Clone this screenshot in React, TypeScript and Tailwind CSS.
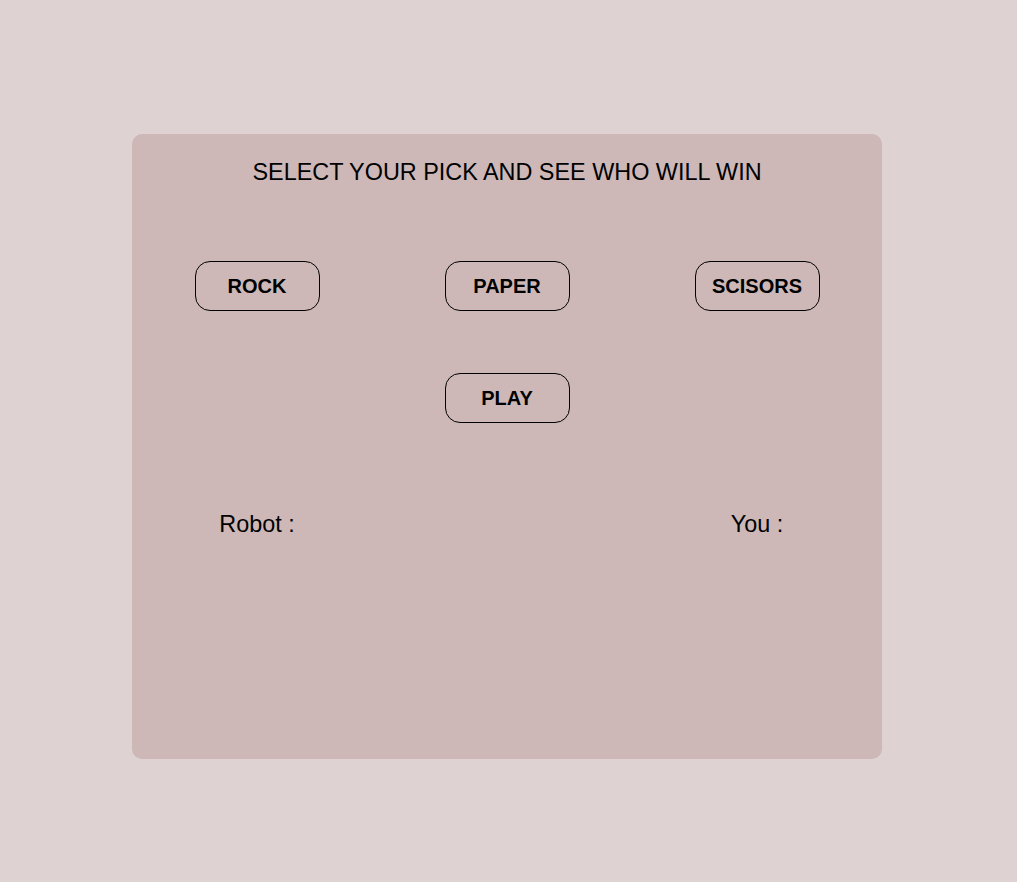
import React from "react";

const btn =
  "w-[125px] h-[50px] border border-black rounded-[15px] bg-transparent text-[20px] leading-[23px] font-bold text-black flex items-center justify-center";

export default function App() {
  return (
    <div
      className="w-full min-h-[882px] bg-[#ded2d2] pt-[134px]"
      style={{ fontFamily: '"Liberation Sans", Arial, sans-serif' }}
    >
      <div className="ml-[132px] w-[750px] h-[625px] bg-[#cdb8b7] rounded-[10px] flex flex-col items-center">
        <h1 className="mt-[25px] text-[23.4px] leading-[27px] text-black font-normal">
          SELECT YOUR PICK AND SEE WHO WILL WIN
        </h1>
        <div className="grid grid-cols-3 w-full mt-[75px]">
          <div className="flex justify-center">
            <button className={btn}>ROCK</button>
          </div>
          <div className="flex justify-center">
            <button className={btn}>PAPER</button>
          </div>
          <div className="flex justify-center">
            <button className={btn}>SCISORS</button>
          </div>
        </div>
        <div className="grid grid-cols-3 w-full mt-[62px]">
          <div />
          <div className="flex justify-center">
            <button className={btn}>PLAY</button>
          </div>
          <div />
        </div>
        <div className="grid grid-cols-3 w-full mt-[88px] text-[23.4px] leading-[27px] text-black">
          <div className="text-center">Robot :</div>
          <div />
          <div className="text-center">You :</div>
        </div>
      </div>
    </div>
  );
}
